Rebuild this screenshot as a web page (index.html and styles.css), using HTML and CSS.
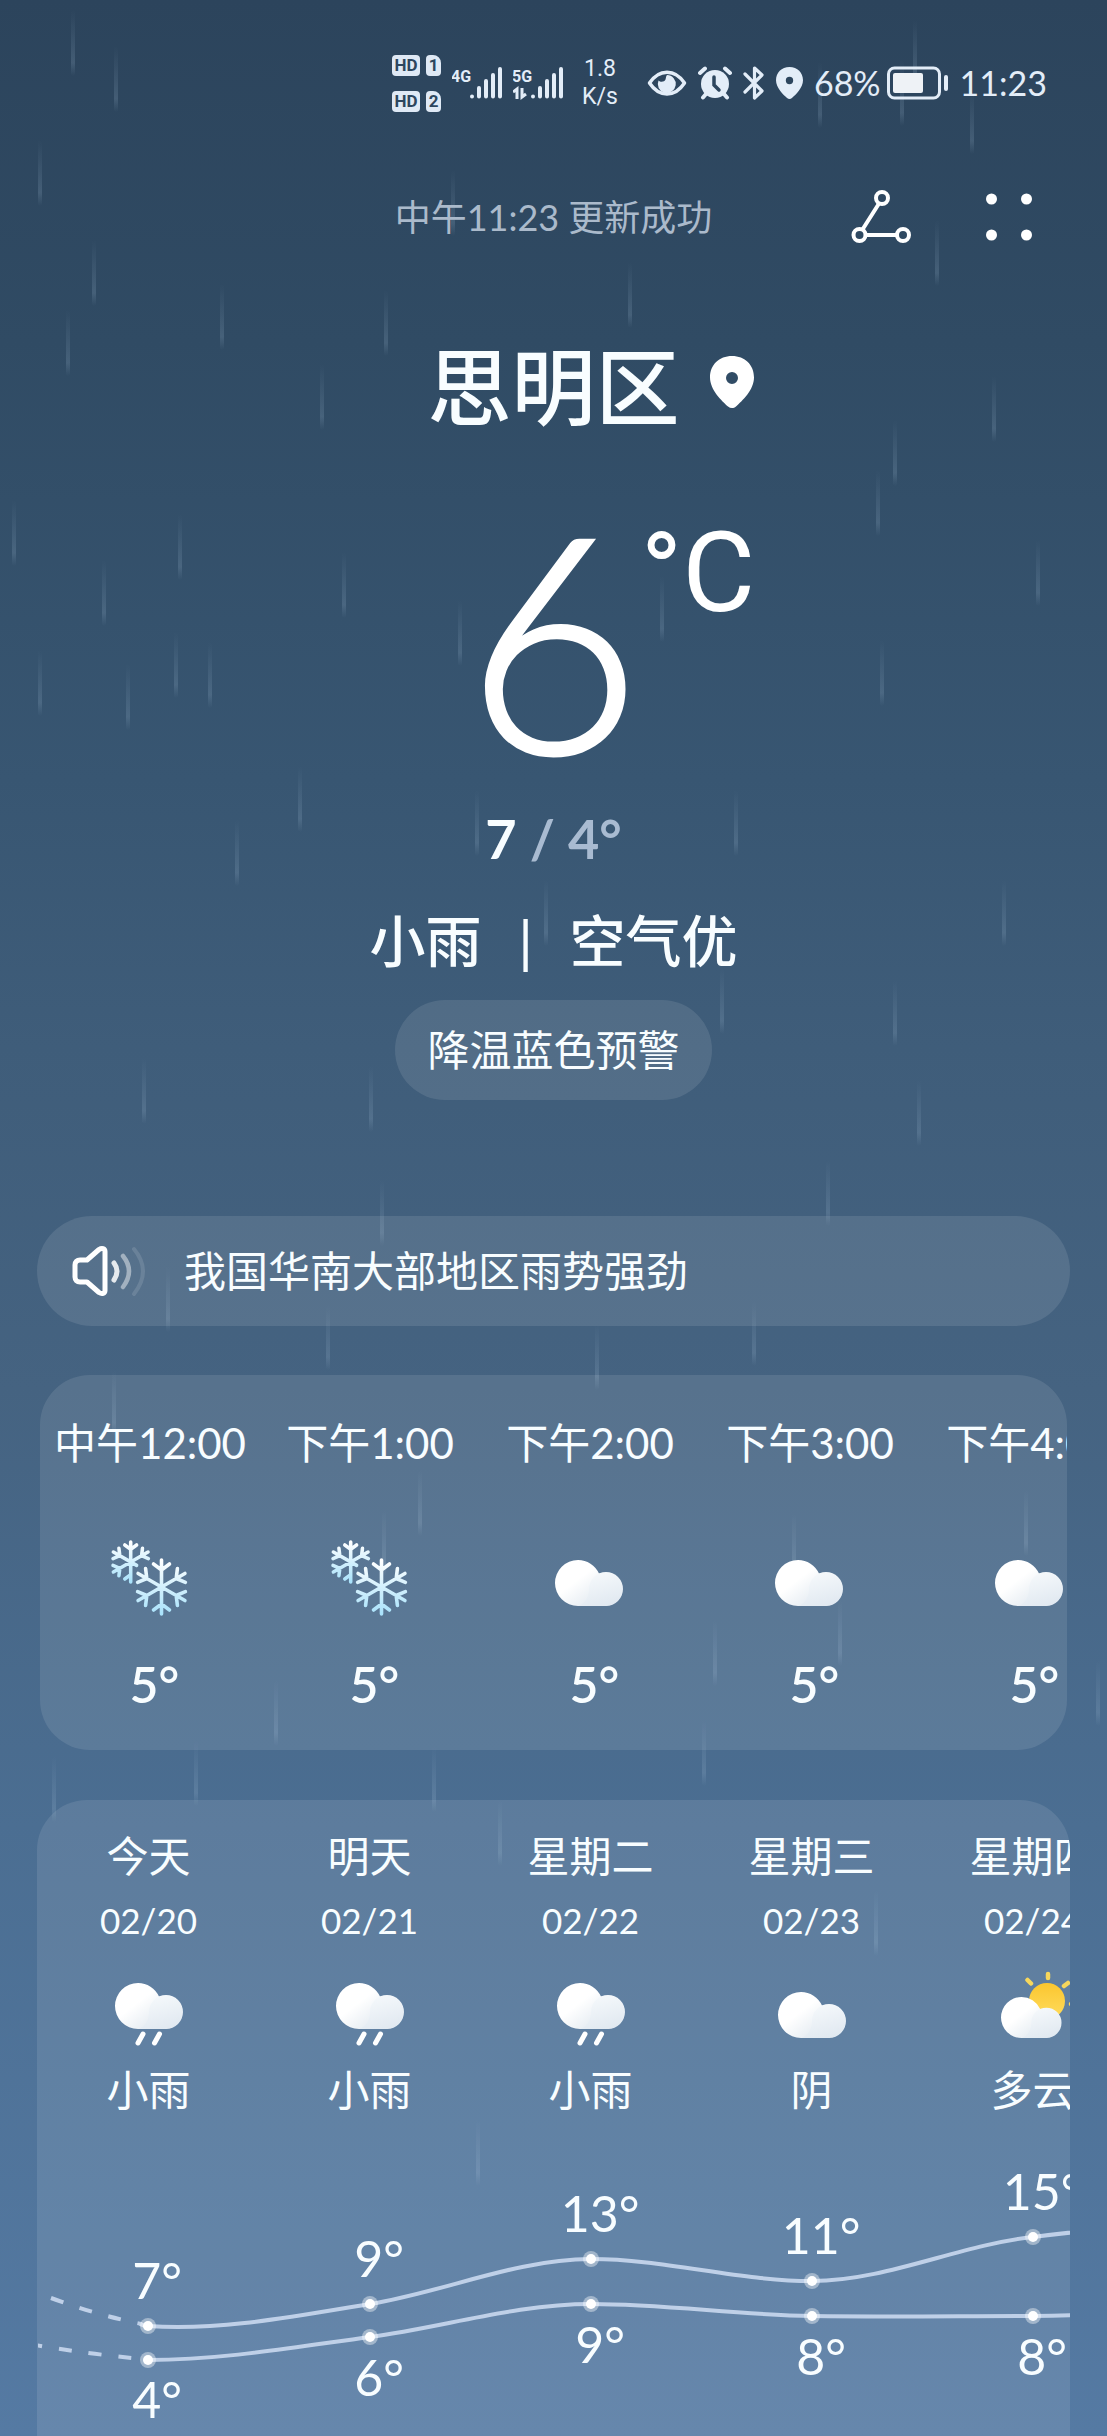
FILE: index.html
```
<!DOCTYPE html>
<html lang="zh-CN">
<head>
    <meta charset="UTF-8">
    <meta name="viewport" content="width=device-width, initial-scale=1.0">
    <title>天气</title>
    <link rel="stylesheet" href="styles.css">
</head>
<body>
    <!-- 共用图标 -->
    <svg class="defs" width="0" height="0" aria-hidden="true">
        <defs>
            <linearGradient id="cloudBack" x1="0" y1="0" x2="1" y2="1">
                <stop offset="0.4" stop-color="#ffffff"/>
                <stop offset="1" stop-color="#d5e0ea"/>
            </linearGradient>
            <linearGradient id="cloudFront" x1="0.2" y1="0" x2="0.6" y2="1">
                <stop offset="0" stop-color="#f7fafc"/>
                <stop offset="1" stop-color="#e1e9f1"/>
            </linearGradient>
            <linearGradient id="sunFill" x1="0" y1="0" x2="0" y2="1">
                <stop offset="0" stop-color="#fbc62f"/>
                <stop offset="1" stop-color="#ffdc5e"/>
            </linearGradient>
            <linearGradient id="ice" gradientUnits="userSpaceOnUse" x1="0" y1="-27" x2="0" y2="27">
                <stop offset="0" stop-color="#ffffff"/>
                <stop offset="1" stop-color="#a9e2fb"/>
            </linearGradient>
            <linearGradient id="dropFill" x1="0" y1="0" x2="0" y2="1">
                <stop offset="0" stop-color="#a9c4dc" stop-opacity="0"/>
                <stop offset="0.8" stop-color="#a9c4dc" stop-opacity="0.18"/>
                <stop offset="1" stop-color="#a9c4dc" stop-opacity="0"/>
            </linearGradient>
            <g id="cloud">
                <path d="M23 0a23 23 0 0 1 21 13.500A17 17 0 0 1 51 46H23A23 23 0 0 1 23 0z" fill="url(#cloudBack)"/>
                <path d="M34 29a17 17 0 1 1 17 17H23C30 44 34 37 34 29z" fill="url(#cloudFront)"/>
            </g>
            <g id="snow" fill="none" stroke="url(#ice)" stroke-linecap="round" stroke-linejoin="round">
                <path transform="translate(51.500 49)" stroke-width="3.600" d="M0-27V27M-23.400-13.500 23.400 13.500M23.400-13.500-23.400 13.500M-8-23 0-17 8-23M-8 23 0 17 8 23M23.900-4.600 14.700-8.500 15.900-18.400M-23.900-4.600-14.700-8.500-15.900-18.400M23.900 4.600 14.700 8.500 15.900 18.400M-23.900 4.600-14.700 8.500-15.900 18.400"/>
                <path transform="translate(20.700 24) scale(.74)" stroke-width="4.800" d="M0-27V27M-23.400-13.500 8 4.600M23.400-13.500-23.400 13.500M-8-23 0-17 8-23M-8 23 0 17M23.900-4.600 14.700-8.500 15.900-18.400M-23.900-4.600-14.700-8.500-15.900-18.400M-23.900 4.600-14.700 8.500-15.900 18.400"/>
            </g>
            <g id="rain">
                <use href="#cloud" x="6" y="7"/>
                <path d="M34 58l-5 9M50.500 58l-5 9" stroke="#fff" stroke-width="5" stroke-linecap="round"/>
            </g>
            <path id="pin" fill-rule="evenodd" d="M22 0C9 0 0 9 0 21.500 0 34 12 45 18 50.500c2.500 2 5.500 2 8 0C32 45 44 34 44 21.500 44 9 35 0 22 0zm0 16a6 6 0 1 1 0 12 6 6 0 0 1 0-12z"/>
            <rect id="drop" width="4" height="66" rx="2" fill="url(#dropFill)"/>
        </defs>
    </svg>

    <!-- 背景雨滴 -->
    <svg class="rainfall" viewBox="0 0 1107 2436" preserveAspectRatio="xMidYMin slice" aria-hidden="true">
        <use href="#drop" x="114" y="46"/><use href="#drop" x="38" y="140"/><use href="#drop" x="71" y="10"/>
        <use href="#drop" x="913" y="20"/><use href="#drop" x="900" y="60"/><use href="#drop" x="818" y="62"/>
        <use href="#drop" x="970" y="88"/><use href="#drop" x="451" y="170"/><use href="#drop" x="628" y="262"/>
        <use href="#drop" x="935" y="220"/><use href="#drop" x="92" y="240"/><use href="#drop" x="220" y="284"/>
        <use href="#drop" x="384" y="290"/><use href="#drop" x="66" y="310"/><use href="#drop" x="320" y="364"/>
        <use href="#drop" x="992" y="376"/><use href="#drop" x="893" y="420"/><use href="#drop" x="178" y="514"/>
        <use href="#drop" x="12" y="500"/><use href="#drop" x="102" y="560"/><use href="#drop" x="458" y="600"/>
        <use href="#drop" x="342" y="552"/><use href="#drop" x="876" y="470"/><use href="#drop" x="660" y="576"/>
        <use href="#drop" x="208" y="642"/><use href="#drop" x="174" y="632"/><use href="#drop" x="38" y="650"/>
        <use href="#drop" x="126" y="664"/><use href="#drop" x="1036" y="540"/><use href="#drop" x="880" y="640"/>
        <use href="#drop" x="298" y="766"/><use href="#drop" x="475" y="790"/><use href="#drop" x="235" y="820"/>
        <use href="#drop" x="734" y="790"/><use href="#drop" x="1002" y="880"/><use href="#drop" x="544" y="880"/>
        <use href="#drop" x="893" y="980"/><use href="#drop" x="720" y="968"/><use href="#drop" x="142" y="1058"/>
        <use href="#drop" x="369" y="1066"/><use href="#drop" x="917" y="1080"/><use href="#drop" x="826" y="1160"/>
        <use href="#drop" x="380" y="1180"/><use href="#drop" x="166" y="1266"/><use href="#drop" x="326" y="1304"/>
        <use href="#drop" x="752" y="1300"/><use href="#drop" x="595" y="1324"/><use href="#drop" x="112" y="1370"/>
        <use href="#drop" x="382" y="1510"/><use href="#drop" x="418" y="1470"/><use href="#drop" x="792" y="1514"/>
        <use href="#drop" x="1024" y="1490"/><use href="#drop" x="838" y="1600"/><use href="#drop" x="713" y="1620"/>
        <use href="#drop" x="274" y="1680"/><use href="#drop" x="1096" y="1660"/><use href="#drop" x="702" y="1720"/>
        <use href="#drop" x="432" y="1746"/><use href="#drop" x="194" y="1740"/><use href="#drop" x="52" y="1756"/>
        <use href="#drop" x="498" y="1800"/><use href="#drop" x="874" y="1890"/><use href="#drop" x="476" y="2120"/>
    </svg>

    <div class="status">
        <div class="hd">
            <span class="tag">HD</span><span class="tag sim">1</span>
            <span class="tag">HD</span><span class="tag sim">2</span>
        </div>
        <svg width="50" height="34" viewBox="0 0 50 34">
            <text class="net" x="-1" y="16">4G</text>
            <path class="bars" d="M20 30.500v.1M27 22v8.600M34 15v15.600M41 9v21.600M48 3v27.600"/>
        </svg>
        <svg width="50" height="34" viewBox="0 0 50 34">
            <text class="net" x="-1" y="16">5G</text>
            <path class="arrows" d="M0 26l4-3v10M9 22v9l4-3"/>
            <path class="bars" d="M20 30.500v.1M27 22v8.600M34 15v15.600M41 9v21.600M48 3v27.600"/>
        </svg>
        <div class="speed">1.8<br>K/s</div>
        <svg width="40" height="28" viewBox="0 0 40 28">
            <path d="M2.500 14C12-.5 28-.5 37.500 14 28 28.500 12 28.500 2.500 14z" fill="none" stroke="#e3edf8" stroke-width="3.500" stroke-linejoin="round"/>
            <path d="M20 6a9 9 0 1 1-8.500 5.500c2 2 6 1.500 7-1 .6-1.800.4-3.300 1.500-4.500z" fill="#e3edf8"/>
        </svg>
        <svg width="34" height="34" viewBox="0 0 34 34">
            <circle cx="17" cy="18" r="14" fill="#e3edf8"/>
            <path d="M2 7l5-4.500M32 7l-5-4.500M8 28l-3 3.500M26 28l3 3.500" stroke="#e3edf8" stroke-width="4" stroke-linecap="round"/>
            <path d="M16 11v8l5 5" fill="none" stroke="#2d465e" stroke-width="3.500" stroke-linecap="round"/>
        </svg>
        <svg width="22" height="34" viewBox="0 0 22 34">
            <path d="M2 8l17 17-7.500 7V2L19 9 2 26" fill="none" stroke="#e3edf8" stroke-width="3.200" stroke-linejoin="round" stroke-linecap="round"/>
        </svg>
        <svg width="27" height="32" viewBox="0 0 44 52" fill="#e3edf8"><use href="#pin"/></svg>
        <span class="battery">
            <span>68%</span>
            <svg width="62" height="34" viewBox="0 0 62 34">
                <rect x="1.500" y="2" width="51" height="30" rx="6" fill="none" stroke="#e3edf8" stroke-width="3"/>
                <rect x="6" y="7" width="30" height="20" rx="2" fill="#eef2f6"/>
                <path d="M59 11v12" stroke="#e3edf8" stroke-width="4" stroke-linecap="round"/>
            </svg>
        </span>
        <span>11:23</span>
    </div>

    <header class="header">
        <p class="updated">中午11:23 更新成功</p>
        <div class="actions">
            <button type="button" aria-label="分享">
                <svg width="60" height="60" viewBox="0 0 60 60" fill="none" stroke="#fff" stroke-width="4">
                    <circle cx="31" cy="11" r="6"/>
                    <circle cx="8.500" cy="48" r="6"/>
                    <circle cx="52" cy="48" r="6"/>
                    <path d="M28 16.500L11.500 42.500M14.500 48H46"/>
                </svg>
            </button>
            <button type="button" aria-label="更多">
                <svg width="60" height="60" viewBox="0 0 60 60" fill="#fff">
                    <circle cx="12.500" cy="12" r="5.500"/>
                    <circle cx="47.500" cy="12" r="5.500"/>
                    <circle cx="12.500" cy="48" r="5.500"/>
                    <circle cx="47.500" cy="48" r="5.500"/>
                </svg>
            </button>
        </div>
    </header>

    <main>
        <section class="now">
            <div class="centered place">
                <h1>思明区</h1>
                <svg width="44" height="52" viewBox="0 0 44 52" fill="#fff"><use href="#pin"/></svg>
            </div>
            <div class="centered temp">
                <span class="degrees">6</span>
                <span class="unit">°C</span>
            </div>
            <p class="range">7 <span>/ 4°</span></p>
            <p class="condition"><span>小雨</span><span>|</span><span>空气优</span></p>
            <button type="button" class="alert">降温蓝色预警</button>
        </section>

        <section class="news">
            <svg width="76" height="60" viewBox="0 0 76 60" fill="none" stroke="#fff" stroke-linecap="round" stroke-linejoin="round">
                <path stroke-width="5" d="M3 24c0-3 2-5 5-5h7L27 8.500c3-2 6-1 6 2v39c0 3-3 4-6 2L15 41H8c-3 0-5-2-5-5z"/>
                <path stroke-width="5" opacity=".85" d="M42 22q6 8 0 17"/>
                <path stroke-width="4.500" opacity=".45" d="M51 15q12 15 0 31"/>
                <path stroke-width="4" opacity=".12" d="M62 8q18 22 0 45"/>
            </svg>
            <p>我国华南大部地区雨势强劲</p>
        </section>

        <section class="card hourly">
            <ul class="columns">
                <li>
                    <time>中午12:00</time>
                    <svg width="80" height="80" viewBox="0 0 80 80"><use href="#snow"/></svg>
                    <span class="hour-temp">5°</span>
                </li>
                <li>
                    <time>下午1:00</time>
                    <svg width="80" height="80" viewBox="0 0 80 80"><use href="#snow"/></svg>
                    <span class="hour-temp">5°</span>
                </li>
                <li>
                    <time>下午2:00</time>
                    <svg width="80" height="80" viewBox="0 0 80 80"><use href="#cloud" x="5" y="22"/></svg>
                    <span class="hour-temp">5°</span>
                </li>
                <li>
                    <time>下午3:00</time>
                    <svg width="80" height="80" viewBox="0 0 80 80"><use href="#cloud" x="5" y="22"/></svg>
                    <span class="hour-temp">5°</span>
                </li>
                <li>
                    <time>下午4:00</time>
                    <svg width="80" height="80" viewBox="0 0 80 80"><use href="#cloud" x="5" y="22"/></svg>
                    <span class="hour-temp">5°</span>
                </li>
            </ul>
        </section>

        <section class="card daily">
            <ul class="columns">
                <li>
                    <span>今天</span>
                    <time>02/20</time>
                    <svg width="80" height="80" viewBox="0 0 80 80"><use href="#rain"/></svg>
                    <span>小雨</span>
                </li>
                <li>
                    <span>明天</span>
                    <time>02/21</time>
                    <svg width="80" height="80" viewBox="0 0 80 80"><use href="#rain"/></svg>
                    <span>小雨</span>
                </li>
                <li>
                    <span>星期二</span>
                    <time>02/22</time>
                    <svg width="80" height="80" viewBox="0 0 80 80"><use href="#rain"/></svg>
                    <span>小雨</span>
                </li>
                <li>
                    <span>星期三</span>
                    <time>02/23</time>
                    <svg width="80" height="80" viewBox="0 0 80 80"><use href="#cloud" x="6" y="16"/></svg>
                    <span>阴</span>
                </li>
                <li>
                    <span>星期四</span>
                    <time>02/24</time>
                    <svg class="sunny" width="80" height="80" viewBox="0 0 80 80">
                        <circle cx="54" cy="25" r="18" fill="url(#sunFill)"/>
                        <path d="M55-2v4M34.500 4l3.500 3.500M75 7l-4 3M78 28h4" stroke="#f7d75c" stroke-width="4.500" stroke-linecap="round"/>
                        <use href="#cloud" transform="translate(8 21) scale(.89)"/>
                    </svg>
                    <span>多云</span>
                </li>
            </ul>

            <!-- 最高/最低气温曲线，每度 11px -->
            <svg class="chart" width="1105" height="284" viewBox="0 0 1105 284">
                <path class="past" d="M13 148Q62 166 104 174"/>
                <path class="past" d="M-9 194Q50 204 104 209"/>
                <path class="line" d="M102 174Q106 176 110 176C184 181 258 166 332 154S479 109 553 109 700 131 774 131 921 95 995 87Q1050 80 1105 76"/>
                <path class="line" d="M110 210C184 210 258 197 332 187S479 154 553 154 700 165 774 166 921 166 995 166Q1050 165 1105 163"/>
                <g class="halo">
                    <circle cx="110" cy="176" r="8"/><circle cx="332" cy="154" r="8"/><circle cx="553" cy="109" r="8"/><circle cx="774" cy="131" r="8"/><circle cx="995" cy="87" r="8"/>
                    <circle cx="110" cy="210" r="8"/><circle cx="332" cy="187" r="8"/><circle cx="553" cy="154" r="8"/><circle cx="774" cy="166" r="8"/><circle cx="995" cy="166" r="8"/>
                </g>
                <g class="dots">
                    <circle cx="110" cy="176" r="5"/><circle cx="332" cy="154" r="5"/><circle cx="553" cy="109" r="5"/><circle cx="774" cy="131" r="5"/><circle cx="995" cy="87" r="5"/>
                    <circle cx="110" cy="210" r="5"/><circle cx="332" cy="187" r="5"/><circle cx="553" cy="154" r="5"/><circle cx="774" cy="166" r="5"/><circle cx="995" cy="166" r="5"/>
                </g>
                <g class="labels">
                    <text x="119" y="149">7°</text><text x="341" y="127">9°</text><text x="562" y="82">13°</text><text x="783" y="104">11°</text><text x="1004" y="60">15°</text>
                    <text x="119" y="268">4°</text><text x="341" y="246">6°</text><text x="562" y="213">9°</text><text x="783" y="225">8°</text><text x="1004" y="225">8°</text>
                </g>
            </svg>
        </section>
    </main>
</body>
</html>
```

FILE: styles.css
```
* {
    box-sizing: border-box;
}
body {
    position: relative;
    display: flex;
    flex-direction: column;
    min-height: 100vh;
    margin: 0;
    overflow-x: hidden;
    font-family: Lato, "Noto Sans CJK SC", sans-serif;
    font-size: 42px;
    line-height: 50px;
    color: #f8fdff;
    background: linear-gradient(#2c445c 0%, #304b64 14%, #385672 32%, #3f5d7a 43%, #456381 57%, #4b6e92 75%, #557aa3 100%);
}
h1, p, ul {
    margin: 0;
    padding: 0;
}
ul {
    list-style: none;
}
svg {
    display: block;
    flex: none;
}
button {
    padding: 0;
    border: none;
    background: none;
    font: inherit;
    color: inherit;
    cursor: pointer;
}
.defs {
    position: absolute;
}
.rainfall {
    position: absolute; /* 铺在内容下面 */
    inset: 0;
    width: 100%;
    height: 100%;
    z-index: -1;
}

/* 状态栏 */
.status {
    display: flex;
    justify-content: flex-end;
    align-items: center;
    gap: 11px;
    height: 60px;
    margin-top: 53px;
    padding-right: 60px;
    font-size: 34px;
    color: #e3edf8;
}
.hd {
    display: grid;
    grid-template-columns: 28px 15px;
    gap: 15px 6px;
}
.tag {
    height: 21px;
    border-radius: 4px;
    background: #dfe9f5;
    color: #2d465e;
    font: bold 17px/21px Roboto, sans-serif;
    text-align: center;
}
.sim {
    border-top-right-radius: 8px;
}
.net {
    font: bold 16px Roboto, sans-serif;
    fill: #e3edf8;
}
.bars {
    fill: none;
    stroke: #e3edf8;
    stroke-width: 4;
    stroke-linecap: round;
}
.arrows {
    fill: none;
    stroke: #e3edf8;
    stroke-width: 3;
}
.speed {
    margin: 0 18px 0 8px;
    font: 23px/28px Roboto, sans-serif;
    text-align: center;
}
.battery {
    display: flex;
    align-items: center;
    gap: 6px;
}

/* 顶部 */
.header, .centered {
    display: grid;
    grid-template-columns: 1fr auto 1fr;
}
.header {
    align-items: center;
    margin-top: 69px;
    padding: 0 68px;
}
.updated {
    grid-column: 2;
    font-size: 36px;
    line-height: 70px;
    color: #abbacb;
}
.actions {
    display: flex;
    justify-content: flex-end;
    gap: 68px;
}

/* 当前天气 */
.now {
    display: flex;
    flex-direction: column;
    align-items: center;
    margin-top: 85px;
}
.centered {
    width: 100%;
}
.place {
    align-items: center;
    column-gap: 30px;
}
.place svg {
    margin-bottom: 10px;
}
h1 {
    grid-column: 2;
    font-size: 84px;
    font-weight: 500;
    line-height: 100px;
}
.temp {
    margin-top: 50px;
    color: #fff;
}
.degrees {
    grid-column: 2;
    font-size: 300px;
    font-weight: 300;
    line-height: 300px;
    -webkit-text-stroke: 4px #fff; /* 比 Light 略粗 */
}
.unit {
    padding-top: 26px;
    font-family: Roboto, sans-serif;
    font-size: 112px;
    line-height: 120px;
}
.range {
    margin-top: 22px;
    font-size: 54px;
    font-weight: 700;
    line-height: 60px;
}
.range span {
    color: #a9bbd1;
}
.condition {
    display: flex;
    gap: 37px;
    margin-top: 36px;
    font-size: 56px;
    font-weight: 500;
    line-height: 72px;
}
.alert {
    margin-top: 23px;
    padding: 0 32px;
    border-radius: 50px;
    background: rgba(255, 255, 255, 0.1);
    line-height: 100px;
}

/* 语音播报 */
.news {
    display: flex;
    align-items: center;
    gap: 36px;
    margin: 116px 37px 0;
    padding: 30px 35px;
    border-radius: 55px;
    background: rgba(255, 255, 255, 0.1);
}
.news svg {
    margin: -5px 0;
}

/* 预报卡片 */
main {
    display: flex;
    flex-direction: column;
    flex: 1;
}
.card {
    margin-top: 49px;
    overflow: hidden;
    border-radius: 50px;
    background: rgba(255, 255, 255, 0.1);
}
.columns {
    display: flex;
}
.columns li {
    display: flex;
    flex: none;
    flex-direction: column;
    align-items: center;
    white-space: nowrap;
}
.hourly {
    margin-left: 40px;
    margin-right: 40px;
    padding: 43px 0 36px;
}
.hourly li {
    width: 220px;
}
.hourly svg {
    margin: 70px 0 36px;
}
.hour-temp {
    padding-left: 9px;
    font-size: 50px;
    font-weight: 600;
    line-height: 60px;
}
.daily {
    flex: 1;
    margin-top: 50px;
    margin-left: 37px;
    margin-right: 37px;
    padding: 31px 0 0 1px;
    border-radius: 50px 50px 0 0;
}
.daily li {
    width: 221px;
}
.daily time {
    margin-top: 19px;
    font-size: 35px;
    line-height: 40px;
}
.daily li svg {
    margin: 36px 0 9px;
}
.sunny {
    overflow: visible;
}

/* 曲线 */
.chart {
    margin-top: 35px;
}
.line, .past {
    fill: none;
    stroke: #bfd0e8;
    stroke-width: 4;
}
.past {
    stroke-dasharray: 13 17;
}
.halo {
    fill: rgba(255, 255, 255, 0.4);
}
.dots {
    fill: #fff;
}
.labels {
    font-size: 50px;
    text-anchor: middle;
    fill: #f8fdff;
}
```
